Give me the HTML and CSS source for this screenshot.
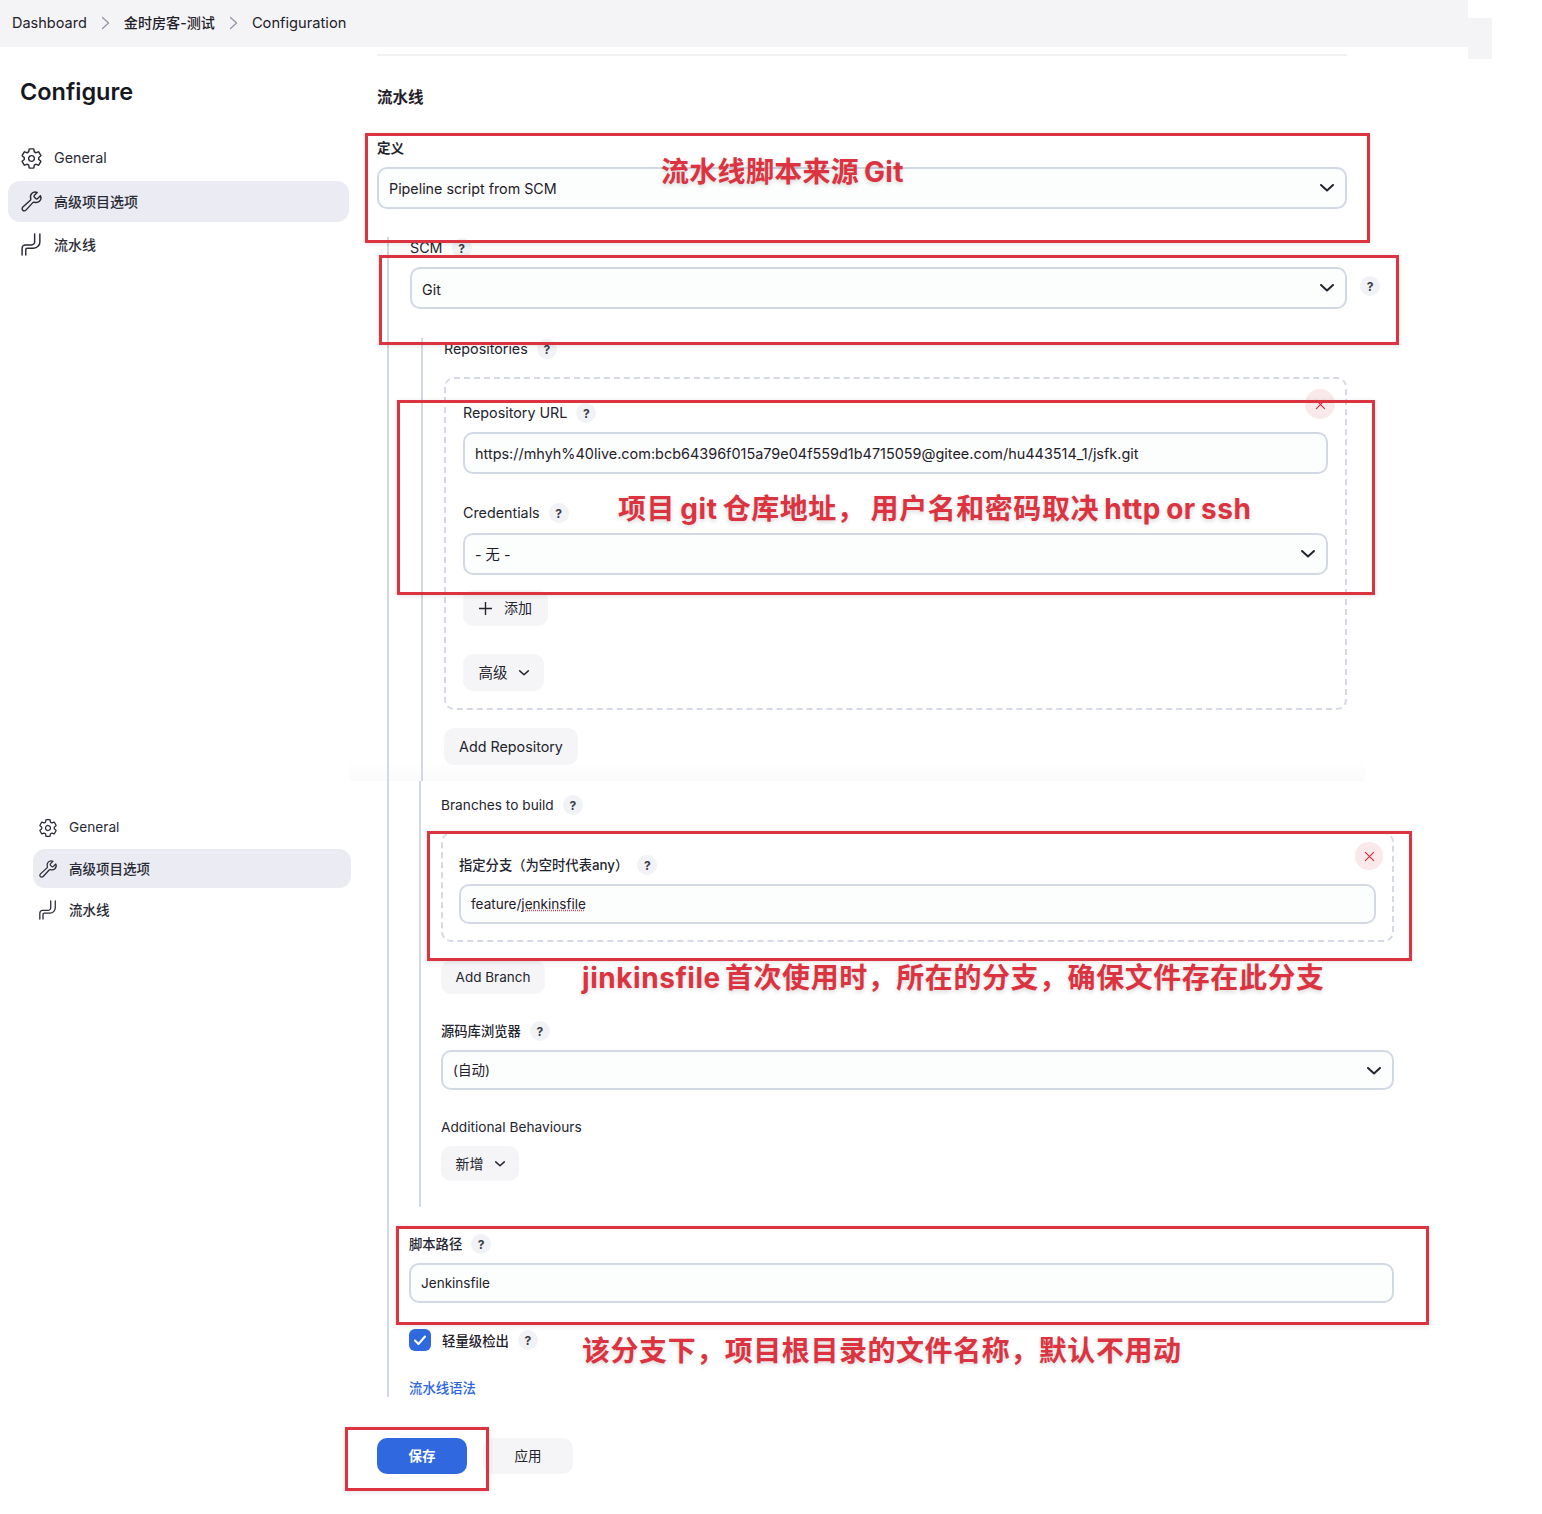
FILE: index.html
```html
<!DOCTYPE html>
<html lang="zh-CN">
<head>
    <meta charset="UTF-8">
    <title>Configure</title>
    <link rel="stylesheet" href="styles.css">
</head>
<body>
    <svg class="icon-defs" width="0" height="0">
        <symbol id="gear" viewBox="0 0 512 512">
            <path d="M262.29 192.31a64 64 0 1057.4 57.4 64.13 64.13 0 00-57.4-57.4zM416.39 256a154.34 154.34 0 01-1.53 20.79l45.21 35.46a10.81 10.81 0 012.45 13.75l-42.77 74a10.81 10.81 0 01-13.14 4.59l-44.9-18.08a16.11 16.11 0 00-15.17 1.75A164.48 164.48 0 01325 400.8a15.94 15.94 0 00-8.82 12.14l-6.73 47.89a11.08 11.08 0 01-10.68 9.17h-85.54a11.11 11.11 0 01-10.69-8.87l-6.72-47.82a16.07 16.07 0 00-9-12.22 155.3 155.3 0 01-21.46-12.57 16 16 0 00-15.11-1.71l-44.89 18.07a10.81 10.81 0 01-13.14-4.58l-42.77-74a10.8 10.8 0 012.45-13.75l38.21-30a16.05 16.05 0 006-14.08c-.36-4.17-.58-8.33-.58-12.5s.21-8.27.58-12.35a16 16 0 00-6.07-13.94l-38.19-30A10.81 10.81 0 0149.48 186l42.77-74a10.81 10.81 0 0113.14-4.59l44.9 18.08a16.11 16.11 0 0015.17-1.75A164.48 164.48 0 01187 111.2a15.94 15.94 0 008.82-12.14l6.73-47.89A11.08 11.08 0 01213.23 42h85.54a11.11 11.11 0 0110.69 8.87l6.72 47.82a16.07 16.07 0 009 12.22 155.3 155.3 0 0121.46 12.57 16 16 0 0015.11 1.71l44.89-18.07a10.81 10.81 0 0113.14 4.58l42.77 74a10.8 10.8 0 01-2.45 13.75l-38.21 30a16.05 16.05 0 00-6.05 14.08c.33 4.14.55 8.3.55 12.47z" fill="none" stroke="currentColor" stroke-width="32" stroke-linecap="round" stroke-linejoin="round"/>
        </symbol>
        <symbol id="wrench" viewBox="0 0 512 512">
            <path d="M393.87 190a32.1 32.1 0 01-45.25 0l-26.57-26.57a32.09 32.09 0 010-45.26L382.19 58a1 1 0 00-.3-1.64c-38.82-16.64-89.15-8.16-121.11 23.57-30.58 30.35-32.32 76-21.12 115.84a31.93 31.93 0 01-9.06 32.08L64 380a48.17 48.17 0 1068 68l153.86-167a31.93 31.93 0 0131.6-9.13c39.54 10.59 84.54 8.6 114.72-21.19 32.49-32 39.5-88.56 23.75-120.93a1 1 0 00-1.6-.26z" fill="none" stroke="currentColor" stroke-width="32" stroke-miterlimit="10" stroke-linecap="round"/>
        </symbol>
        <symbol id="pipe" viewBox="0 0 22 22">
            <path d="M2 21v-6.500a3 3 0 013-3h6a3 3 0 003-3V1" fill="none" stroke="currentColor" stroke-width="1.400" stroke-linecap="round"/>
            <path d="M5.500 21v-5a1.500 1.500 0 011.500-1.500h6a6 6 0 006-6V1" fill="none" stroke="currentColor" stroke-width="1.400" stroke-linecap="round"/>
        </symbol>
        <symbol id="chevron" viewBox="0 0 14 8">
            <path d="M1 1l6 5.500L13 1" fill="none" stroke="currentColor" stroke-width="2" stroke-linecap="round" stroke-linejoin="round"/>
        </symbol>
        <symbol id="crumb" viewBox="0 0 9 14">
            <path d="M1.500 1.500L7.500 7l-6 5.500" fill="none" stroke="currentColor" stroke-width="1.200" stroke-linecap="round" stroke-linejoin="round"/>
        </symbol>
        <symbol id="cross" viewBox="0 0 12 12">
            <path d="M1.500 1.500l9 9M10.500 1.500l-9 9" fill="none" stroke="currentColor" stroke-width="1.200" stroke-linecap="round"/>
        </symbol>
        <symbol id="plus" viewBox="0 0 13 13">
            <path d="M6.500 0v13M0 6.500h13" fill="none" stroke="currentColor" stroke-width="1.400"/>
        </symbol>
    </svg>

    <div class="breadcrumb">
        <a>Dashboard</a>
        <svg class="crumb-sep"><use href="#crumb"/></svg>
        <a class="zh">金时房客-测试</a>
        <svg class="crumb-sep"><use href="#crumb"/></svg>
        <a class="crumb-last">Configuration</a>
    </div>
    <div class="corner-patch"></div>

    <!-- first screenshot -->
    <div class="top">
        <div class="sidebar">
            <h1>Configure</h1>
            <div class="nav">
                <a class="nav-item"><svg><use href="#gear"/></svg>General</a>
                <a class="nav-item active zh"><svg><use href="#wrench"/></svg>高级项目选项</a>
                <a class="nav-item zh"><svg><use href="#pipe"/></svg>流水线</a>
            </div>
        </div>
        <div class="main">
            <div class="rule"></div>
            <h2>流水线</h2>
            <div class="label label-strong def-label">定义</div>
            <div class="field select mt10">Pipeline script from SCM<svg><use href="#chevron"/></svg></div>
            <div class="nest scm-nest">
                <div class="label">SCM <span class="help">?</span></div>
                <div class="help-row">
                    <div class="field select">Git<svg><use href="#chevron"/></svg></div>
                    <span class="help">?</span>
                </div>
                <div class="nest repo-nest">
                    <div class="label">Repositories <span class="help">?</span></div>
                    <div class="dashed repo-box">
                        <span class="remove remove-lg"><svg><use href="#cross"/></svg></span>
                        <div class="label">Repository URL <span class="help">?</span></div>
                        <div class="field field-url">https://mhyh%40live.com:bcb64396f015a79e04f559d1b4715059@gitee.com/hu443514_1/jsfk.git</div>
                        <div class="label cred-label">Credentials <span class="help">?</span></div>
                        <div class="field field-cred select mt10">- 无 -<svg><use href="#chevron"/></svg></div>
                        <div class="btn btn-add"><svg class="plus-icon"><use href="#plus"/></svg>添加</div>
                        <div class="btn btn-adv">高级<svg><use href="#chevron"/></svg></div>
                    </div>
                    <div class="btn btn-repo">Add Repository</div>
                </div>
            </div>
        </div>
    </div>

    <!-- second screenshot -->
    <div class="bottom">
        <div class="sidebar sidebar-low">
            <div class="nav">
                <a class="nav-item"><svg><use href="#gear"/></svg>General</a>
                <a class="nav-item active zh"><svg><use href="#wrench"/></svg>高级项目选项</a>
                <a class="nav-item zh"><svg><use href="#pipe"/></svg>流水线</a>
            </div>
        </div>
        <div class="main main-low">
            <div class="nest low-nest">
                <div class="nest branch-nest">
                    <div class="label label-latin">Branches to build <span class="help">?</span></div>
                    <div class="dashed branch-box">
                        <span class="remove"><svg><use href="#cross"/></svg></span>
                        <div class="label label-small">指定分支（为空时代表any） <span class="help">?</span></div>
                        <div class="field field-40">feature/<span class="spell">jenkinsfile</span></div>
                    </div>
                    <div class="btn btn-branch">Add Branch</div>
                    <div class="label label-small mt27">源码库浏览器 <span class="help">?</span></div>
                    <div class="field field-40 select">(自动)<svg><use href="#chevron"/></svg></div>
                    <div class="label label-latin mt27">Additional Behaviours</div>
                    <div class="btn btn-new">新增<svg><use href="#chevron"/></svg></div>
                </div>
                <div class="label label-small mt27">脚本路径 <span class="help">?</span></div>
                <div class="field field-40">Jenkinsfile</div>
                <div class="check-row">
                    <span class="checkbox"><svg viewBox="0 0 22 22"><path d="M6 11.500l3.500 3.500L16 7.500" fill="none" stroke="#fff" stroke-width="2" stroke-linecap="round" stroke-linejoin="round"/></svg></span>
                    <span class="label-small">轻量级检出</span>
                    <span class="help">?</span>
                </div>
                <a class="syntax-link">流水线语法</a>
            </div>
            <div class="actions">
                <div class="btn btn-save">保存</div>
                <div class="btn btn-apply">应用</div>
            </div>
        </div>
    </div>

    <!-- red annotations drawn over the screenshots -->
    <div class="mark mark-def"></div>
    <div class="mark mark-scm"></div>
    <div class="mark mark-repo"></div>
    <div class="mark mark-branch"></div>
    <div class="mark mark-path"></div>
    <div class="mark mark-save"></div>
    <div class="note note-def">流水线脚本来源 Git</div>
    <div class="note note-repo">项目 git 仓库地址， 用户名和密码取决 http or ssh</div>
    <div class="note note-branch">jinkinsfile 首次使用时，所在的分支，确保文件存在此分支</div>
    <div class="note note-path">该分支下，项目根目录的文件名称，默认不用动</div>
</body>
</html>
```

FILE: styles.css
```css
* {
    box-sizing: border-box;
}
body {
    margin: 0;
    position: relative;
    width: 1542px;
    height: 1514px;
    overflow: hidden;
    background-color: white;
    color: #1f2029;
    font-family: Inter, 'Noto Sans CJK SC', sans-serif;
    font-size: 14px;
}
.icon-defs {
    position: absolute;
}
.breadcrumb {
    display: flex;
    align-items: center;
    gap: 14px;
    width: 1468px;
    height: 47px;
    padding: 0 0 2px 12px;
    background-color: #f4f4f7;
    font-size: 14.500px;
}
.breadcrumb .zh {
    font-size: 14.100px;
    position: relative;
    top: -1px;
}
.crumb-last {
    font-size: 14.700px;
}
.zh {
    font-weight: 500;
}
.crumb-sep {
    width: 9px;
    height: 14px;
    color: #8f93a3;
}
.corner-patch {
    position: absolute;
    top: 18px;
    left: 1468px;
    width: 24px;
    height: 41px;
    background-color: #f4f4f7;
}
.top {
    display: flex;
    height: 734px;
    font-size: 14.300px;
    background: linear-gradient(#ffffff, #fbfbfc) no-repeat 350px 100% / 1015px 22px;
}
.bottom {
    display: flex;
    font-size: 13.700px;
}
.sidebar {
    width: 377px;
    flex: none;
    padding: 30px 28px 0 8px;
}
.sidebar h1 {
    margin: 0 0 31px 12px;
    font-size: 23.500px;
    line-height: 30px;
    font-weight: 600;
    color: #16171f;
}
.nav {
    display: flex;
    flex-direction: column;
    gap: 2px;
}
.nav-item {
    display: flex;
    align-items: center;
    gap: 11px;
    height: 41px;
    padding: 0 0 2px 12px;
    border-radius: 12px;
    color: #2a2b35;
}
.nav-item.zh {
    font-size: 14px;
}
.nav-item svg {
    width: 23px;
    height: 23px;
    flex: none;
    margin-top: 2px;
}
.nav-item.active {
    background-color: #eaebf3;
}
.sidebar-low {
    padding: 27px 26px 0 33px;
}
.sidebar-low .nav-item {
    height: 39px;
    padding-left: 5px;
    gap: 11px;
}
.sidebar-low .nav-item.zh {
    font-size: 13.500px;
}
.sidebar-low .nav-item svg {
    width: 20px;
    height: 20px;
}
.main {
    width: 970px;
    flex: none;
}
.main-low {
    width: 1017px;
}
.rule {
    height: 2px;
    margin-top: 7px;
    background-color: #f2f2f5;
}
h2 {
    margin: 32px 0 0;
    font-size: 15.500px;
    line-height: 20px;
    font-weight: 700;
}
.label {
    display: flex;
    align-items: center;
    height: 20px;
    gap: 9px;
    padding-bottom: 2px;
    margin-bottom: 9px;
    color: #23242e;
}
.label .help {
    margin-top: 2px;
}
.label-strong {
    font-size: 13.500px;
    font-weight: 700;
}
.label-small {
    font-size: 13.300px;
    font-weight: 500;
}
.label-latin {
    padding-bottom: 0;
}
.label-latin .help {
    margin-top: 0;
}
.def-label {
    margin-top: 31px;
    margin-bottom: 0;
    height: 18px;
}
.mt10 {
    margin-top: 10px;
}
.mt27 {
    margin-top: 27px;
}
.help {
    display: inline-flex;
    align-items: center;
    justify-content: center;
    width: 20px;
    height: 20px;
    flex: none;
    border-radius: 50%;
    background-color: #f1f2f6;
    color: #3a3c48;
    font-size: 12px;
    font-weight: 700;
}
.field {
    position: relative;
    display: flex;
    align-items: center;
    height: 42px;
    padding: 0 10px;
    border: 2px solid #d3d8e5;
    border-radius: 10px;
    background-color: #fcfdfd;
    color: #1f2029;
}
.field-url {
    font-size: 14.450px;
}
.field-cred {
    padding-bottom: 2px;
}
.field-40 {
    height: 40px;
    font-size: 13.550px;
}
.field-40.select {
    padding-bottom: 2px;
}
.field.select svg {
    position: absolute;
    right: 11px;
    top: 15px;
    width: 14px;
    height: 8px;
    color: #23242e;
}
.spell {
    text-decoration: underline dotted #d9495a;
}
.nest {
    border-left: 2px solid #d3d8e5;
}
.scm-nest {
    margin: 28px 0 0 10px;
    padding: 1px 0 0 21px;
}
.help-row {
    display: flex;
    gap: 13px;
    margin-right: -33px;
}
.help-row .field {
    flex: 1;
    padding-top: 2px;
}
.help-row .help {
    margin-top: 9px;
}
.repo-nest {
    margin: 29px 0 0 11px;
    padding: 1px 0 16px 21px;
}
.dashed {
    position: relative;
    border: 2px dashed #d5d9e5;
    border-radius: 10px;
}
.repo-box {
    margin-top: 18px;
    height: 333px;
    padding: 24px 17px 0;
}
.cred-label {
    margin-top: 29px;
    margin-bottom: 0;
}
.remove {
    position: absolute;
    top: 8px;
    right: 9px;
    display: flex;
    align-items: center;
    justify-content: center;
    width: 28px;
    height: 28px;
    border-radius: 50%;
    background-color: #f9e9eb;
    color: #d4283a;
}
.remove svg {
    width: 11px;
    height: 11px;
}
.remove-lg {
    top: 10px;
    right: 10px;
    width: 30px;
    height: 30px;
}
.btn {
    display: flex;
    align-items: center;
    justify-content: center;
    padding-bottom: 2px;
    border-radius: 10px;
    background-color: #f5f5f8;
    color: #23242e;
}
.btn svg {
    width: 10px;
    height: 6px;
    margin-top: 2px;
    margin-left: 11px;
}
.btn .plus-icon {
    width: 13px;
    height: 13px;
    margin: 2px 12px 0 0;
}
.btn-add {
    width: 85px;
    height: 36px;
    margin-top: 15px;
    font-size: 14px;
}
.btn-adv {
    width: 81px;
    height: 37px;
    margin-top: 28px;
    font-size: 14.500px;
}
.btn-repo {
    width: 134px;
    height: 37px;
    margin-top: 18px;
    padding-bottom: 0;
}
.low-nest {
    margin-left: 10px;
    height: 616px;
    padding-left: 20px;
}
.branch-nest {
    margin-left: 10px;
    height: 426px;
    padding: 14px 0 0 20px;
}
.branch-box {
    margin-top: 17px;
    height: 110px;
    padding: 21px 16px 0;
}
.branch-nest .label:first-child {
    margin-bottom: 0;
}
.btn-branch {
    width: 104px;
    height: 34px;
    margin-top: 18px;
    padding-bottom: 0;
    font-size: 13.500px;
}
.btn-new {
    width: 78px;
    height: 35px;
    font-size: 14px;
}
.check-row {
    display: flex;
    align-items: center;
    gap: 11px;
    height: 22px;
    margin-top: 26px;
}
.check-row .label-small {
    font-size: 13.400px;
}
.check-row .help {
    margin-left: -2px;
}
.checkbox {
    width: 22px;
    height: 22px;
    border-radius: 6px;
    background-color: #3068e0;
}
.checkbox svg {
    display: block;
}
.syntax-link {
    display: block;
    margin-top: 27px;
    font-size: 13.400px;
    line-height: 20px;
    font-weight: 500;
    color: #2f66e0;
}
.actions {
    display: flex;
    gap: 16px;
    margin-top: 41px;
}
.btn-save, .btn-apply {
    width: 90px;
    height: 36px;
    font-size: 13.500px;
}
.btn-save {
    background-color: #3068e0;
    color: white;
    font-weight: 700;
}
.mark {
    position: absolute;
    border: 3px solid #dc3341;
    box-shadow: 0 1px 5px rgba(0, 0, 0, 0.12);
}
.mark-def {
    left: 365px;
    top: 133px;
    width: 1005px;
    height: 110px;
}
.mark-scm {
    left: 379px;
    top: 255px;
    width: 1020px;
    height: 90px;
}
.mark-repo {
    left: 397px;
    top: 400px;
    width: 978px;
    height: 195px;
}
.mark-branch {
    left: 427px;
    top: 831px;
    width: 985px;
    height: 130px;
}
.mark-path {
    left: 396px;
    top: 1226px;
    width: 1033px;
    height: 99px;
}
.mark-save {
    left: 345px;
    top: 1427px;
    width: 144px;
    height: 64px;
}
.note {
    position: absolute;
    font-family: Inter, 'Noto Sans CJK SC', sans-serif;
    font-size: 28px;
    line-height: 36px;
    font-weight: 700;
    letter-spacing: 0.550px;
    word-spacing: -3px;
    white-space: nowrap;
    color: #dc3341;
    text-shadow: 0 2px 4px rgba(0, 0, 0, 0.16);
}
.note-def {
    left: 661px;
    top: 154px;
    letter-spacing: 0.300px;
    word-spacing: -2px;
}
.note-repo {
    left: 618px;
    top: 491px;
    word-spacing: -2px;
}
.note-branch {
    left: 582px;
    top: 960px;
}
.note-path {
    left: 582px;
    top: 1333px;
}
```
